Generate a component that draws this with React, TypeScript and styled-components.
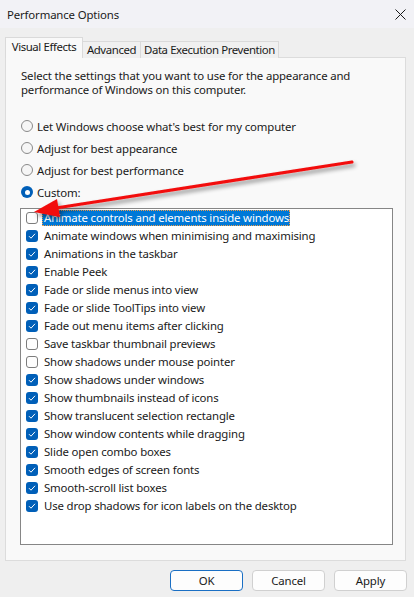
import React, { useState } from 'react';
import styled, { createGlobalStyle, css } from 'styled-components';

const GlobalStyle = createGlobalStyle`
  html, body {
    margin: 0;
    padding: 0;
    background: #efefef;
  }
  body {
    font-family: 'Noto Sans', 'Liberation Sans', sans-serif;
    font-size: 11.4px;
    letter-spacing: -0.15px;
    color: #1a1a1a;
  }
`;

const Window = styled.div`
  position: relative;
  width: 414px;
  height: 597px;
  display: flex;
  flex-direction: column;
  background: #efefef;
  overflow: hidden;
`;

const TitleBar = styled.div`
  height: 28px;
  display: flex;
  align-items: center;
  justify-content: space-between;
  padding: 0 8px 0 7px;
  background: #f2f2f6;
`;

const Title = styled.div`
  color: #1b1b1b;
`;

const Content = styled.div`
  display: flex;
  flex-direction: column;
  padding: 9px 8px 0 5px;
`;

const TabStrip = styled.div`
  display: flex;
  align-items: flex-end;
  height: 21px;
  margin-bottom: -1px;
  position: relative;
  z-index: 1;
`;

const Tab = styled.div<{ $active?: boolean; $w: number }>`
  box-sizing: border-box;
  width: ${(p) => p.$w}px;
  line-height: 15px;
  text-align: center;
  white-space: nowrap;
  letter-spacing: -0.4px;
  border: 1px solid #dadada;
  border-bottom: none;
  color: #1a1a1a;
  ${(p) =>
    p.$active
      ? css`
          height: 21px;
          padding-top: 1px;
          background: #f9f9f9;
        `
      : css`
          height: 17px;
          margin-left: -1px;
          background: #f0f0f0;
        `}
`;

const Panel = styled.div`
  height: 504px;
  box-sizing: border-box;
  border: 1px solid #dcdcdc;
  background: #f9f9f9;
  padding: 11px 13px 0 14px;
  display: flex;
  flex-direction: column;
`;

const Description = styled.p`
  margin: 0 0 18px 1px;
  line-height: 14px;
`;

const RadioGroup = styled.div`
  display: flex;
  flex-direction: column;
  margin-bottom: 5px;
`;

const RadioRow = styled.label`
  display: flex;
  align-items: center;
  height: 22px;
  gap: 4px;
  padding-left: 1px;
`;

const RadioDot = styled.span<{ $checked?: boolean }>`
  width: 12px;
  height: 12px;
  box-sizing: border-box;
  border-radius: 50%;
  flex: none;
  ${(p) =>
    p.$checked
      ? css`
          background: #005fb8;
          display: flex;
          align-items: center;
          justify-content: center;
          &::after {
            content: '';
            width: 5px;
            height: 5px;
            border-radius: 50%;
            background: #fff;
          }
        `
      : css`
          border: 1px solid #8a8a8a;
          background: #f6f6f6;
        `}
`;

const ListBox = styled.div`
  width: 373px;
  height: 337px;
  box-sizing: border-box;
  border: 1px solid #868686;
  background: #fff;
  padding: 0 0 0 5px;
  display: flex;
  flex-direction: column;
`;

const Item = styled.div`
  display: flex;
  align-items: center;
  height: 18px;
  flex: none;
  gap: 4px;
`;

const Box = styled.span<{ $checked?: boolean }>`
  width: 12px;
  height: 12px;
  box-sizing: border-box;
  border-radius: 3px;
  flex: none;
  display: flex;
  align-items: center;
  justify-content: center;
  ${(p) =>
    p.$checked
      ? css`
          background: #005fb8;
        `
      : css`
          border: 1px solid #7c7c7c;
          background: #fdfdfd;
        `}
`;

const ItemLabel = styled.span<{ $selected?: boolean }>`
  line-height: 16px;
  padding: 0 1px 0 2px;
  ${(p) =>
    p.$selected &&
    css`
      background: #0078d7;
      color: #fff;
      outline: 1px dotted #f2a04a;
      outline-offset: -1px;
    `}
`;

const Footer = styled.div`
  display: flex;
  justify-content: flex-end;
  gap: 9px;
  padding: 9px 7px 0 0;
`;

const Button = styled.button<{ $primary?: boolean }>`
  width: 73px;
  height: 21px;
  box-sizing: border-box;
  border-radius: 4px;
  background: #fdfdfd;
  border: 1px solid ${(p) => (p.$primary ? '#1a6fc4' : '#d0d0d0')};
  font-family: inherit;
  font-size: inherit;
  letter-spacing: inherit;
  color: #1a1a1a;
  padding: 0;
`;

const ArrowLayer = styled.svg`
  position: absolute;
  left: 0;
  top: 0;
  pointer-events: none;
`;

const CloseIcon = () => (
  <svg width="11" height="11" viewBox="0 0 11 11">
    <path d="M0.5 0.5 L10.5 10.5 M10.5 0.5 L0.5 10.5" stroke="#1a1a1a" strokeWidth="1" />
  </svg>
);

const Check = () => (
  <svg width="8" height="8" viewBox="0 0 8 8">
    <path d="M1 4.2 L3 6.2 L7 1.8" fill="none" stroke="#fff" strokeWidth="1" />
  </svg>
);

const tabs = [
  { label: 'Visual Effects', w: 78 },
  { label: 'Advanced', w: 59 },
  { label: 'Data Execution Prevention', w: 139 },
];

const effects = [
  { label: 'Animate controls and elements inside windows', on: false },
  { label: 'Animate windows when minimising and maximising', on: true },
  { label: 'Animations in the taskbar', on: true },
  { label: 'Enable Peek', on: true },
  { label: 'Fade or slide menus into view', on: true },
  { label: 'Fade or slide ToolTips into view', on: true },
  { label: 'Fade out menu items after clicking', on: true },
  { label: 'Save taskbar thumbnail previews', on: false },
  { label: 'Show shadows under mouse pointer', on: false },
  { label: 'Show shadows under windows', on: true },
  { label: 'Show thumbnails instead of icons', on: true },
  { label: 'Show translucent selection rectangle', on: true },
  { label: 'Show window contents while dragging', on: true },
  { label: 'Slide open combo boxes', on: true },
  { label: 'Smooth edges of screen fonts', on: true },
  { label: 'Smooth-scroll list boxes', on: true },
  { label: 'Use drop shadows for icon labels on the desktop', on: true },
];

const modes = [
  "Let Windows choose what's best for my computer",
  'Adjust for best appearance',
  'Adjust for best performance',
  'Custom:',
];

const App = () => {
  const [mode] = useState(3);

  return (
    <Window>
      <GlobalStyle />
      <TitleBar>
        <Title>Performance Options</Title>
        <CloseIcon />
      </TitleBar>
      <Content>
        <TabStrip>
          {tabs.map((t, i) => (
            <Tab key={t.label} $w={t.w} $active={i === 0}>
              {t.label}
            </Tab>
          ))}
        </TabStrip>
        <Panel>
          <Description>
            Select the settings that you want to use for the appearance and
            <br />
            performance of Windows on this computer.
          </Description>
          <RadioGroup>
            {modes.map((m, i) => (
              <RadioRow key={m}>
                <RadioDot $checked={i === mode} />
                {m}
              </RadioRow>
            ))}
          </RadioGroup>
          <ListBox>
            {effects.map((e, i) => (
              <Item key={e.label}>
                <Box $checked={e.on}>{e.on && <Check />}</Box>
                <ItemLabel $selected={i === 0}>{e.label}</ItemLabel>
              </Item>
            ))}
          </ListBox>
        </Panel>
      </Content>
      <Footer>
        <Button $primary>OK</Button>
        <Button>Cancel</Button>
        <Button>Apply</Button>
      </Footer>
      <ArrowLayer width="414" height="597" viewBox="0 0 414 597">
        <defs>
          <filter id="shade" x="-10%" y="-50%" width="120%" height="200%">
            <feDropShadow dx="2" dy="3" stdDeviation="2" floodColor="#000" floodOpacity="0.45" />
          </filter>
        </defs>
        <g filter="url(#shade)">
          <line x1="352" y1="162" x2="56" y2="208" stroke="#f20d0d" strokeWidth="3" strokeLinecap="round" />
          <polygon points="34,212 57,199 60,217" fill="#f20d0d" />
        </g>
      </ArrowLayer>
    </Window>
  );
};

export default App;
